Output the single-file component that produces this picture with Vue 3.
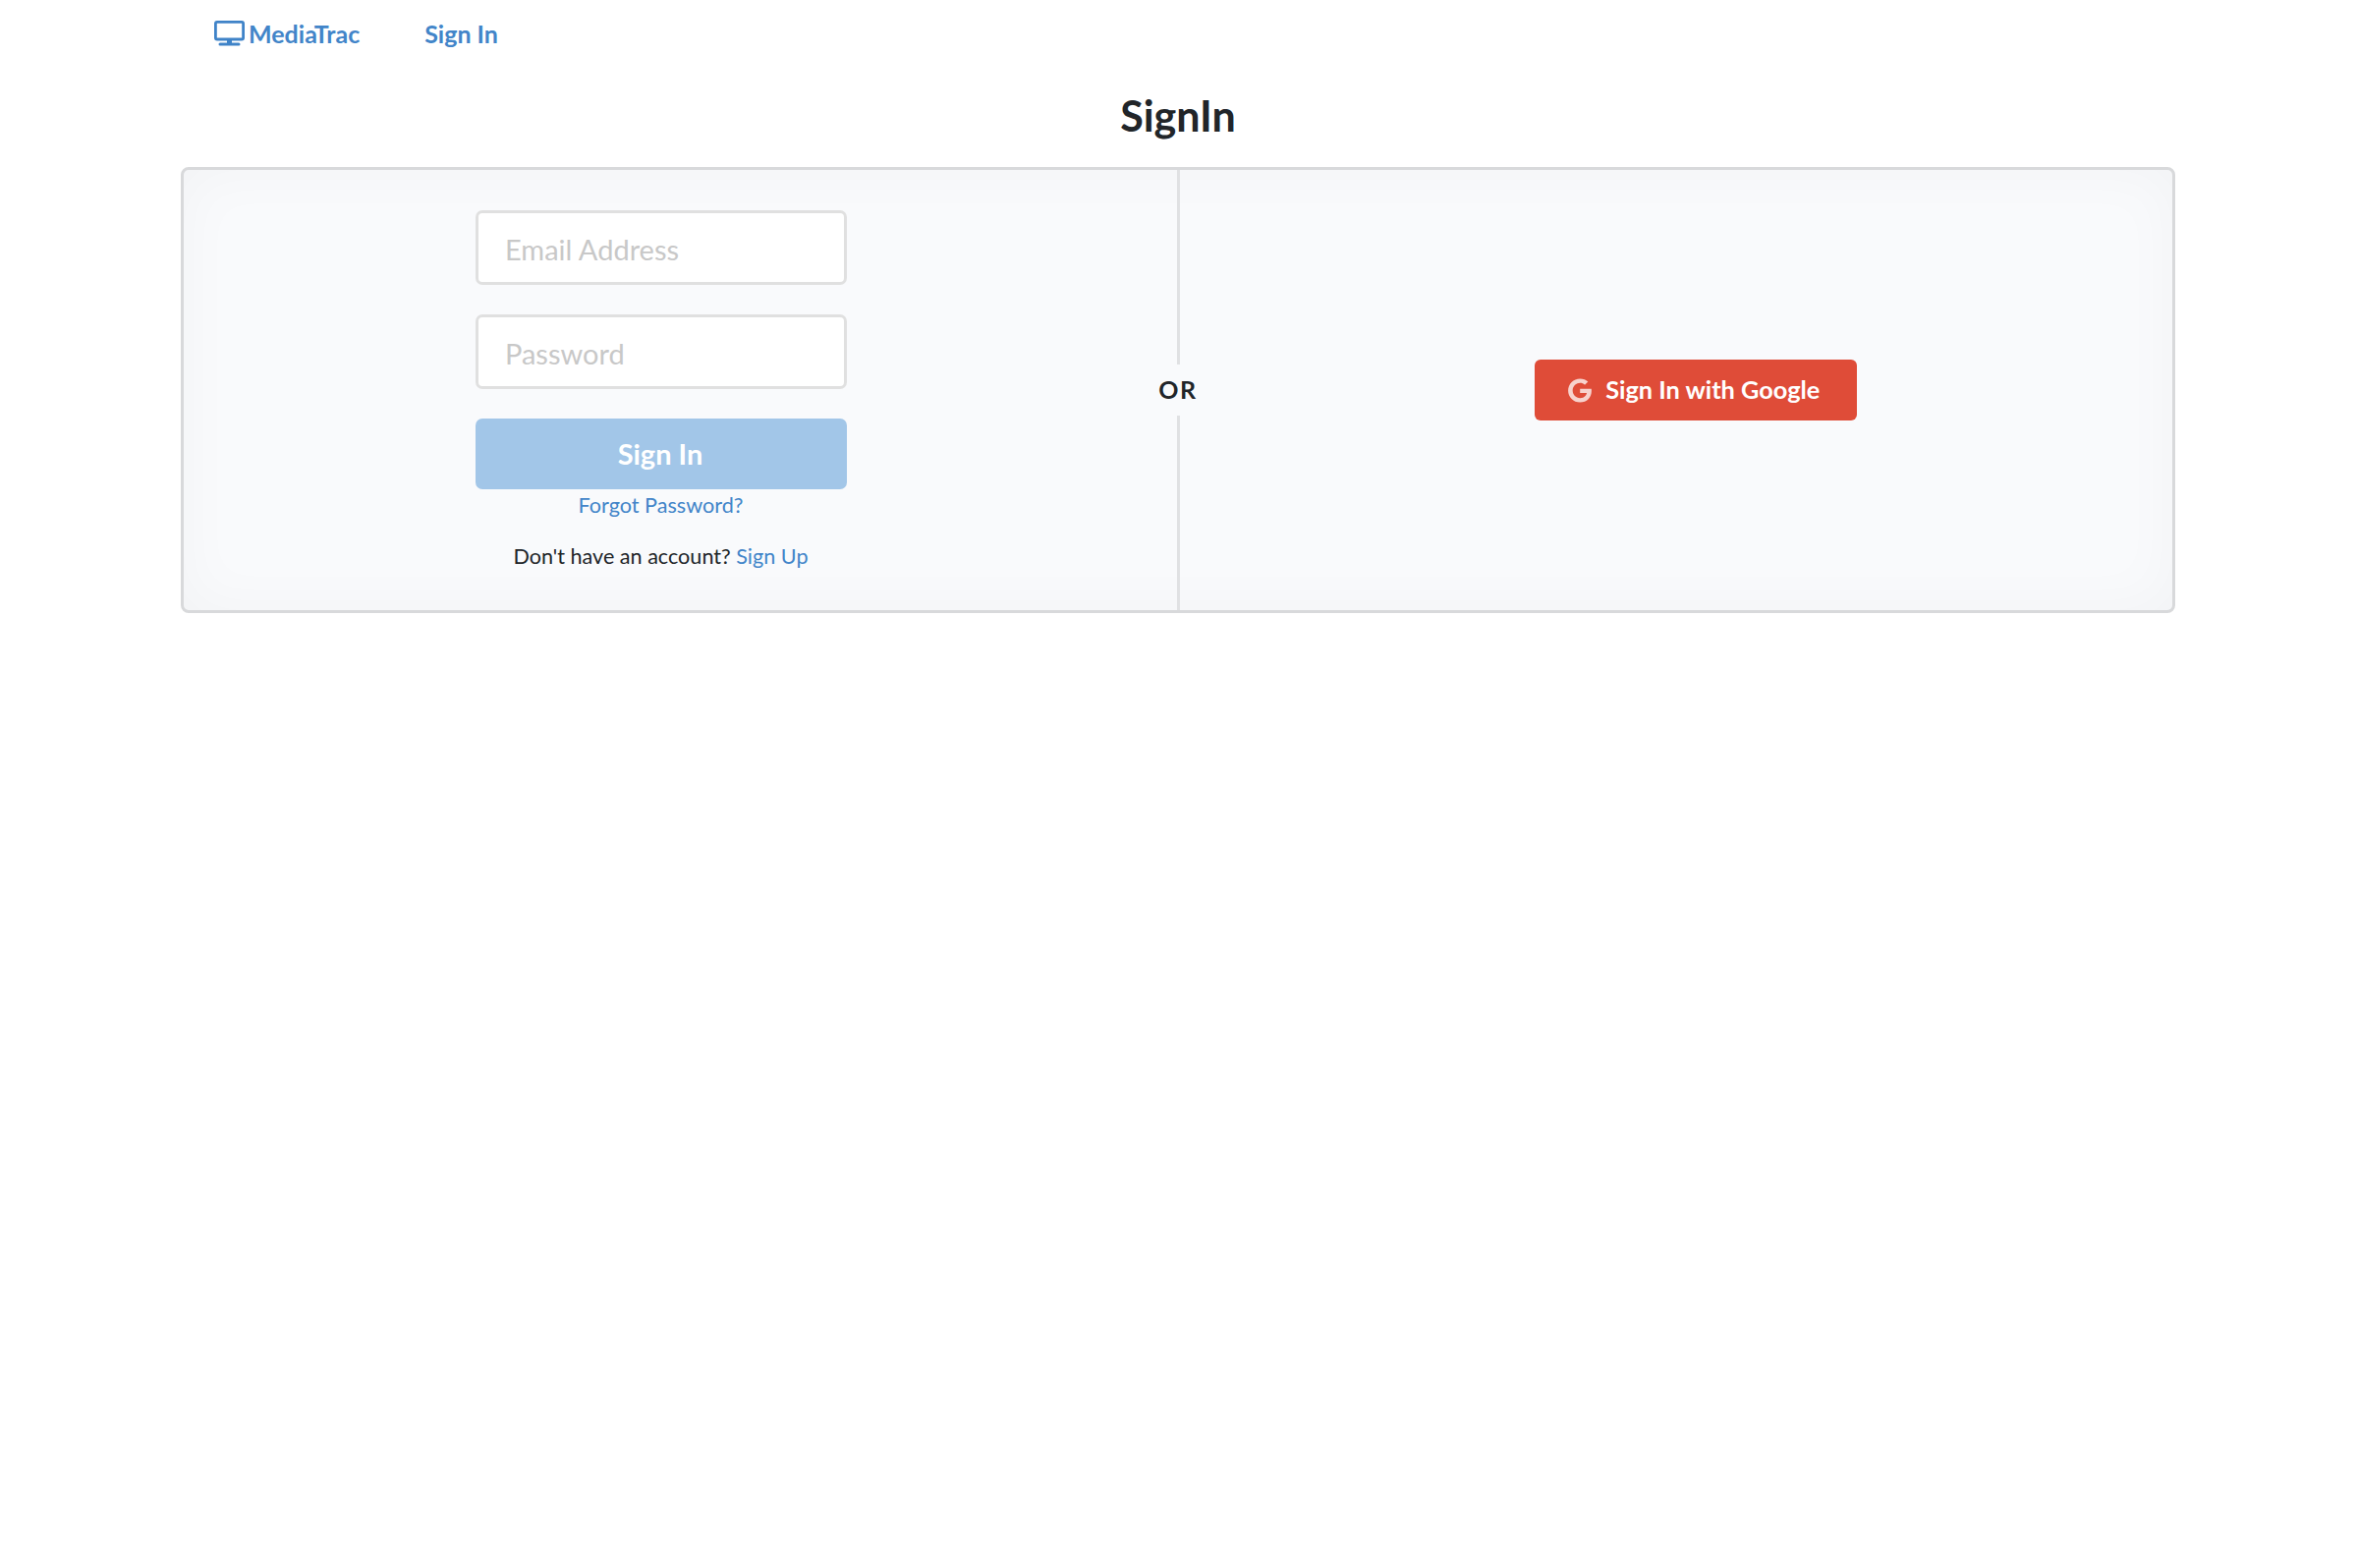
<script setup>
const fields = [
  { id: 'email', type: 'email', placeholder: 'Email Address' },
  { id: 'password', type: 'password', placeholder: 'Password' },
]
</script>

<template>
  <div class="page">
    <nav class="nav">
      <a class="brand">
        <svg class="monitor" viewBox="0 0 31 26" width="31" height="26" aria-hidden="true">
          <rect x="1.4" y="1.4" width="28.2" height="17.6" rx="1.6" fill="none" stroke="#3f83c8" stroke-width="2.8" />
          <rect x="13" y="20" width="5" height="3" fill="#3f83c8" />
          <rect x="4.5" y="22.4" width="22" height="3" rx="1.5" fill="#3f83c8" />
        </svg>
        MediaTrac
      </a>
      <a class="nav-link">Sign In</a>
    </nav>

    <h1 class="title">SignIn</h1>

    <section class="card">
      <div class="left">
        <form class="form" @submit.prevent>
          <input
            v-for="f in fields"
            :key="f.id"
            class="input"
            :type="f.type"
            :placeholder="f.placeholder"
          />
          <button class="submit" type="button">Sign In</button>
          <a class="forgot">Forgot Password?</a>
          <p class="signup">Don't have an account? <a>Sign Up</a></p>
        </form>
      </div>

      <div class="divider"><span class="or">OR</span></div>

      <div class="right">
        <button class="google" type="button">
          <svg class="g" viewBox="0 0 488 512" width="24" height="25" aria-hidden="true">
            <path fill="currentColor" d="M488 261.8C488 403.3 391.1 504 248 504 110.8 504 0 393.2 0 256S110.8 8 248 8c66.8 0 123 24.5 166.3 64.9l-67.5 64.9C258.5 52.6 94.3 116.6 94.3 256c0 86.5 69.1 156.6 153.7 156.6 98.2 0 135-70.4 140.8-106.9H248v-85.3h236.1c2.3 12.7 3.9 24.9 3.9 41.4z" />
          </svg>
          <span class="google-label">Sign In with Google</span>
        </button>
      </div>
    </section>
  </div>
</template>

<style scoped>
.page {
  width: 2030px;
  margin: 0 auto;
  font-family: Lato, "Liberation Sans", sans-serif;
  color: #212529;
}
.nav {
  height: 68px;
  padding-left: 34px;
  display: flex;
  align-items: center;
  gap: 66px;
  font-size: 25px;
  font-weight: 700;
  color: #4285c9;
}
.brand {
  display: flex;
  align-items: center;
  gap: 4px;
}
.title {
  margin: 22px 0 0;
  height: 80px;
  line-height: 56px;
  text-align: center;
  font-size: 43px;
  font-weight: 700;
}
.card {
  height: 454px;
  box-sizing: border-box;
  display: flex;
  border: 3px solid #d8d9db;
  border-radius: 8px;
  background: #f9fafc;
  box-shadow: inset 0 0 60px rgba(0, 0, 0, 0.03);
}
.left {
  flex: 1 1 0;
  min-width: 0;
  display: flex;
  padding-top: 41px;
}
.form {
  width: 378px;
  margin-left: 297px;
  display: flex;
  flex-direction: column;
  align-items: center;
}
.input {
  width: 100%;
  height: 76px;
  box-sizing: border-box;
  margin-bottom: 30px;
  padding: 2px 27px 0;
  border: 3px solid #e0e0e0;
  border-radius: 7px;
  background: #fff;
  font-family: inherit;
  font-size: 29px;
  outline: none;
}
.input::placeholder {
  color: #c8c8c8;
  opacity: 1;
}
.submit {
  width: 100%;
  height: 72px;
  padding: 0 2px 2px 0;
  border: 0;
  border-radius: 7px;
  background: #a2c6e8;
  color: #fff;
  font-family: inherit;
  font-size: 29px;
  font-weight: 700;
}
.forgot {
  padding-right: 1px;
  font-size: 21.6px;
  line-height: 32px;
  color: #4285c9;
}
.signup {
  margin: 20px 0 0;
  padding-right: 1px;
  font-size: 21.6px;
  line-height: 32px;
}
.signup a {
  color: #4285c9;
}
.divider {
  width: 3px;
  flex: none;
  background: #e0e1e3;
  display: flex;
  align-items: center;
  justify-content: center;
}
.or {
  padding: 10px 0 12px;
  background: #f9fafc;
  font-size: 25px;
  font-weight: 700;
  line-height: 30px;
  letter-spacing: 1.5px;
  white-space: nowrap;
  min-width: 50px;
  text-align: center;
}
.right {
  flex: 1 1 0;
  min-width: 0;
  display: flex;
  align-items: center;
  justify-content: center;
}
.google {
  width: 328px;
  height: 62px;
  margin-left: 40px;
  padding: 0 3px 0 0;
  border: 0;
  border-radius: 6px;
  background: #df4c38;
  color: #fff;
  display: flex;
  align-items: center;
  justify-content: center;
  gap: 14px;
  font-family: inherit;
  font-size: 25.3px;
  font-weight: 700;
}
.google-label {
  margin-top: -2px;
}
.g {
  color: rgba(255, 255, 255, 0.75);
}
</style>

<style>
html, body {
  background: #fff;
}
</style>
